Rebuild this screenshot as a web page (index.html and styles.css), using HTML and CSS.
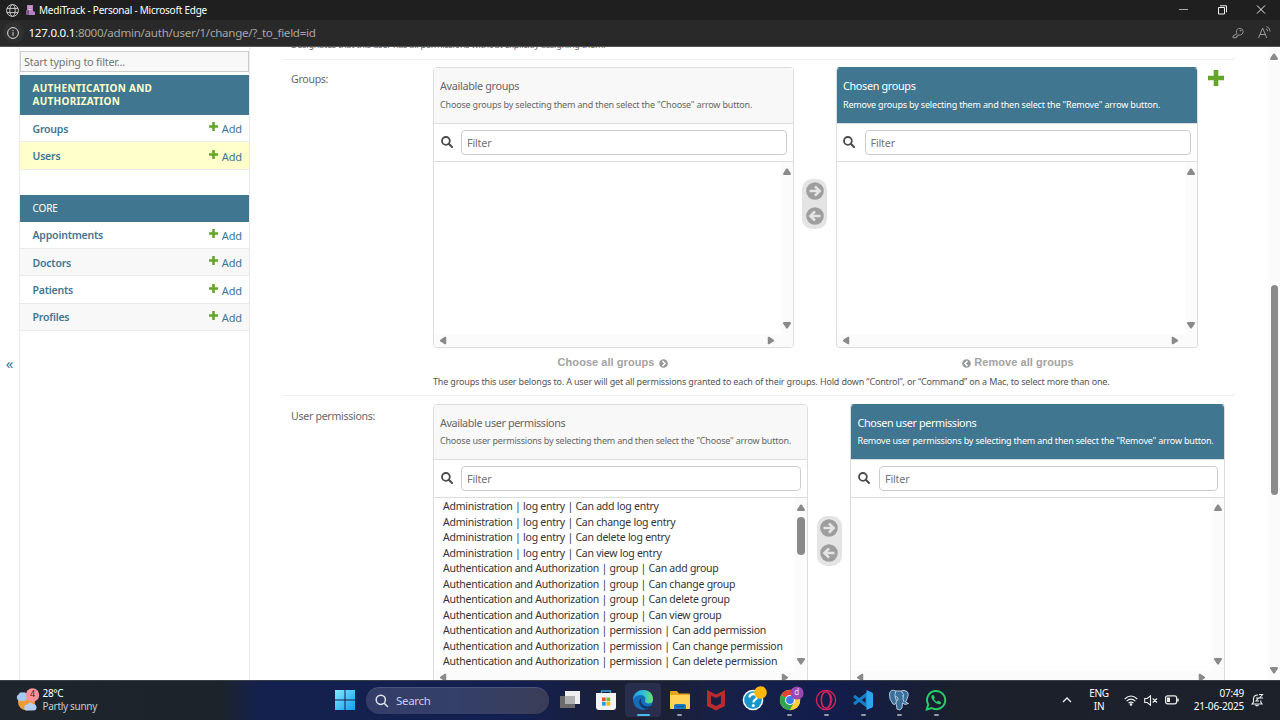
FILE: index.html
```html
<!DOCTYPE html>
<html lang="en">
<head>
<meta charset="utf-8">
<title>MediTrack</title>
<link rel="stylesheet" href="styles.css">
</head>
<body>
<svg width="0" height="0" class="defs">
  <symbol id="plus" viewBox="0 0 16 16"><path d="M5.700 0h4.600v5.700H16v4.600h-5.700V16H5.700v-5.700H0V5.700h5.700z" fill="#64a62a"/></symbol>
  <symbol id="search" viewBox="0 0 12 12"><circle cx="4.9" cy="4.9" r="3.9" fill="none" stroke="#4b4b4b" stroke-width="1.8"/><path d="M7.8 7.8L11 11" stroke="#4b4b4b" stroke-width="2" stroke-linecap="round"/></symbol>
  <symbol id="right" viewBox="0 0 18 18"><circle cx="9" cy="9" r="8.8" fill="#9e9e9e"/><path d="M3.5 9h9M9 4.3L13.6 9 9 13.7" fill="none" stroke="#e4e4e4" stroke-width="2.6"/></symbol>
  <symbol id="left" viewBox="0 0 18 18"><circle cx="9" cy="9" r="8.8" fill="#9e9e9e"/><path d="M14.5 9h-9M9 4.3L4.4 9 9 13.7" fill="none" stroke="#e4e4e4" stroke-width="2.6"/></symbol>
  <symbol id="tri" viewBox="0 0 8 7"><path d="M3.200.8Q4 0 4.800.8L7.900 5.600Q8.200 6.800 7 7H1Q-.2 6.800.1 5.600z" fill="#8a8a8a"/></symbol>
</svg>

<header class="titlebar">
  <svg class="globe" width="13" height="13" viewBox="0 0 13 13" fill="none" stroke="#c9c9c9"><circle cx="6.5" cy="6.5" r="5.9"/><ellipse cx="6.5" cy="6.5" rx="2.7" ry="5.9"/><path d="M1 4.4h11M1 8.6h11"/></svg>
  <svg class="favicon" width="9" height="10" viewBox="0 0 9 10"><path d="M1 0h6v6l2 1v3H1z" fill="#b583b8"/><path d="M0 5h3v5H0z" fill="#7b5a93"/><path d="M2.500 2h3M2.500 4.500h3" stroke="#e8c4e4"/></svg>
  <span class="window-title">MediTrack - Personal - Microsoft Edge</span>
  <svg class="controls" width="87" height="10" viewBox="0 0 87 10" fill="none" stroke="#eee"><path d="M0 4.500h9" stroke="#aaa"/><path d="M39.500 2.500h6v6.500h-6zM41 .8h6.500v6.500"/><path d="M78 .5l8 8M86 .5l-8 8"/></svg>
</header>
<div class="addressbar">
  <span class="info"><svg width="12" height="12" viewBox="0 0 12 12" fill="none" stroke="#ddd"><circle cx="6" cy="6" r="5.400"/><path d="M6 5.200v3.500M6 3v1.200"/></svg></span>
  <span class="url"><b>127.0.0.1</b>:8000/admin/auth/user/1/change/?_to_field=id</span>
  <svg class="key" width="12" height="12" viewBox="0 0 12 12" fill="none" stroke="#989898"><path d="M5 6.700A3.400 3.400 0 1 1 7 8H5.800v1.300H4.300v1.500H1V9z"/><circle cx="8.600" cy="3.600" r=".5"/></svg>
  <svg class="aloud" width="13" height="13" viewBox="0 0 13 13" fill="none" stroke="#989898"><path d="M.5 12L4.700 2l4.100 10M2 8.500h5.300M8 2.700q1.700.8 1.600 2.600M8.500.5q3.600 1.300 3.500 5"/></svg>
</div>

<div class="viewport">
  <div class="toggle">«</div>
  <nav class="sidebar">
    <div class="nav-filter">Start typing to filter...</div>
    <section class="module auth">
      <h2 class="caption current"><span>AUTHENTICATION AND</span><br><span>AUTHORIZATION</span></h2>
      <div class="model"><b>Groups</b><a><svg width="9" height="9"><use href="#plus"/></svg>Add</a></div>
      <div class="model selected"><b>Users</b><a><svg width="9" height="9"><use href="#plus"/></svg>Add</a></div>
    </section>
    <section class="module">
      <h2 class="caption">CORE</h2>
      <div class="model"><b>Appointments</b><a><svg width="9" height="9"><use href="#plus"/></svg>Add</a></div>
      <div class="model alt"><b>Doctors</b><a><svg width="9" height="9"><use href="#plus"/></svg>Add</a></div>
      <div class="model"><b>Patients</b><a><svg width="9" height="9"><use href="#plus"/></svg>Add</a></div>
      <div class="model alt"><b>Profiles</b><a><svg width="9" height="9"><use href="#plus"/></svg>Add</a></div>
    </section>
  </nav>

  <main class="content">
    <div class="form-row superuser"><p class="cut-help">Designates that this user has all permissions without explicitly assigning them.</p></div>

    <div class="form-row groups">
      <label>Groups:</label>
      <div class="field">
        <div class="selector">
          <div class="side">
            <div class="box">
              <div class="head"><h3>Available groups</h3><p>Choose groups by selecting them and then select the "Choose" arrow button.</p></div>
              <div class="filter"><svg width="12" height="12"><use href="#search"/></svg><div class="input">Filter</div></div>
              <div class="list"><div class="options"></div><div class="vbar"><svg class="tri"><use href="#tri"/></svg><svg class="tri down"><use href="#tri"/></svg></div><div class="hbar"><svg class="tri lt"><use href="#tri"/></svg><svg class="tri rt"><use href="#tri"/></svg></div></div>
            </div>
            <div class="all"><span>Choose all groups</span><svg width="9" height="9" viewBox="0 0 9 9"><circle cx="4.500" cy="4.500" r="4.300" fill="#999"/><path d="M3.500 2l2.500 2.500L3.500 7" fill="none" stroke="#fff" stroke-width="1.500"/></svg></div>
          </div>
          <div class="chooser"><svg width="18" height="18"><use href="#right"/></svg><svg width="18" height="18"><use href="#left"/></svg></div>
          <div class="side to">
            <div class="box chosen">
              <div class="head"><h3>Chosen groups</h3><p>Remove groups by selecting them and then select the "Remove" arrow button.</p></div>
              <div class="filter"><svg width="12" height="12"><use href="#search"/></svg><div class="input">Filter</div></div>
              <div class="list"><div class="options"></div><div class="vbar"><svg class="tri"><use href="#tri"/></svg><svg class="tri down"><use href="#tri"/></svg></div><div class="hbar"><svg class="tri lt"><use href="#tri"/></svg><svg class="tri rt"><use href="#tri"/></svg></div></div>
            </div>
            <div class="all"><svg width="9" height="9" viewBox="0 0 9 9"><circle cx="4.500" cy="4.500" r="4.300" fill="#999"/><path d="M5.500 2L3 4.500 5.500 7" fill="none" stroke="#fff" stroke-width="1.500"/></svg><span>Remove all groups</span></div>
          </div>
          <svg class="add-related" width="16" height="16"><use href="#plus"/></svg>
        </div>
        <p class="help">The groups this user belongs to. A user will get all permissions granted to each of their groups. Hold down “Control”, or “Command” on a Mac, to select more than one.</p>
      </div>
    </div>

    <div class="form-row permissions">
      <label>User permissions:</label>
      <div class="field">
        <div class="selector">
          <div class="side">
            <div class="box">
              <div class="head"><h3>Available user permissions</h3><p>Choose user permissions by selecting them and then select the "Choose" arrow button.</p></div>
              <div class="filter"><svg width="12" height="12"><use href="#search"/></svg><div class="input">Filter</div></div>
              <div class="list">
                <div class="options">
                  <div>Administration | log entry | Can add log entry</div>
                  <div>Administration | log entry | Can change log entry</div>
                  <div>Administration | log entry | Can delete log entry</div>
                  <div>Administration | log entry | Can view log entry</div>
                  <div>Authentication and Authorization | group | Can add group</div>
                  <div>Authentication and Authorization | group | Can change group</div>
                  <div>Authentication and Authorization | group | Can delete group</div>
                  <div>Authentication and Authorization | group | Can view group</div>
                  <div>Authentication and Authorization | permission | Can add permission</div>
                  <div>Authentication and Authorization | permission | Can change permission</div>
                  <div>Authentication and Authorization | permission | Can delete permission</div>
                </div>
                <div class="vbar"><svg class="tri"><use href="#tri"/></svg><i class="thumb"></i><svg class="tri down"><use href="#tri"/></svg></div><div class="hbar"><svg class="tri lt"><use href="#tri"/></svg><svg class="tri rt"><use href="#tri"/></svg></div>
              </div>
            </div>
          </div>
          <div class="chooser"><svg width="18" height="18"><use href="#right"/></svg><svg width="18" height="18"><use href="#left"/></svg></div>
          <div class="side to">
            <div class="box chosen">
              <div class="head"><h3>Chosen user permissions</h3><p>Remove user permissions by selecting them and then select the "Remove" arrow button.</p></div>
              <div class="filter"><svg width="12" height="12"><use href="#search"/></svg><div class="input">Filter</div></div>
              <div class="list"><div class="options"></div><div class="vbar"><svg class="tri"><use href="#tri"/></svg><svg class="tri down"><use href="#tri"/></svg></div><div class="hbar"><svg class="tri lt"><use href="#tri"/></svg><svg class="tri rt"><use href="#tri"/></svg></div></div>
            </div>
          </div>
        </div>
      </div>
    </div>
  </main>
  <div class="page-scroll"><svg class="tri"><use href="#tri"/></svg><i></i><svg class="tri down"><use href="#tri"/></svg></div>
</div>

<footer class="taskbar">
  <div class="weather">
    <svg width="24" height="24" viewBox="0 0 24 24"><circle cx="10.500" cy="14" r="8.500" fill="#f09a35"/><path d="M4 13a3.500 3.500 0 0 1-1.500-6.500Q4 3.500 7 4.500q3-1 4 2.500 1 5-3 6z" fill="#a5c8f5"/><path d="M11 22.500a3 3 0 0 1 .5-6q2-3.500 5-.8 4 .3 4 3.800 0 3-3 3z" fill="#b4cff5"/><circle cx="16.500" cy="7" r="6.700" fill="#ff9298"/></svg>
    <span class="badge">4</span>
    <div><div class="temp">28°C</div><div class="cond">Partly sunny</div></div>
  </div>
  <div class="apps">
    <svg class="start" width="20" height="20" viewBox="0 0 20 20"><defs><linearGradient id="win" x2="1" y2="1"><stop stop-color="#7deaff"/><stop offset="1" stop-color="#159bf3"/></linearGradient></defs><path d="M0 0h9.500v9.500H0zM10.500 0H20v9.500h-9.500zM0 10.500h9.500V20H0zM10.500 10.500H20V20h-9.500z" fill="url(#win)"/></svg>
    <div class="searchbox"><svg width="14" height="14" viewBox="0 0 14 14" fill="none" stroke="#e2e5f2" stroke-width="1.500"><circle cx="5.800" cy="5.800" r="4.600"/><path d="M9.200 9.200l3.800 3.800"/></svg><span>Search</span></div>
    <div class="app"><svg width="22" height="22" viewBox="0 0 22 22"><path d="M1 7h15v12H1z" fill="#6b6b6e"/><path d="M6 2h15v13H6z" fill="#eee"/><path d="M6 7h10v8H6z" fill="#b0b0b0"/></svg></div>
    <div class="app"><svg width="22" height="22" viewBox="0 0 22 22"><path d="M6.500 5V2h9v3" fill="none" stroke="#36a9e0" stroke-width="1.300"/><path d="M1 4h20v14q0 3-3 3H4q-3 0-3-3z" fill="#f3f3f3"/><path d="M7 8.500h3.700v3.700H7z" fill="#e95028"/><path d="M11.500 8.500h3.700v3.700h-3.700z" fill="#7cb928"/><path d="M7 13h3.700v3.700H7z" fill="#249fe2"/><path d="M11.500 13h3.700v3.700h-3.700z" fill="#f7b717"/></svg></div>
    <div class="app active"><svg width="22" height="22" viewBox="0 0 22 22"><defs><linearGradient id="eg" x2="1"><stop stop-color="#1f9be5"/><stop offset=".5" stop-color="#30bfdc"/><stop offset="1" stop-color="#6be16a"/></linearGradient></defs><circle cx="11" cy="11" r="10" fill="#146db9"/><path d="M1 11C1-2 21-2 21 10q0 5-5.500 4.500-4-.8-2-4 0-4-4-4.500Q3 6 1 11z" fill="url(#eg)"/><path d="M8 10q-3 6 4 9.500 5 1.200 8-3-7 2.500-10-1.500-2-3-.5-5z" fill="#16346e"/></svg><i></i></div>
    <div class="app"><svg width="22" height="22" viewBox="0 0 22 22"><path d="M1 3q0-1 1-1h6l2 2.500h10q1 0 1 1V10H1z" fill="#e7a51f"/><path d="M1 6h20v13q0 1-1 1H2q-1 0-1-1z" fill="#ffd358"/><path d="M5 20v-3q0-2 2-2h8q2 0 2 2v3z" fill="#1979c7"/><path d="M7 17.500h8" stroke="#0d4d8b"/></svg><i></i></div>
    <div class="app"><svg width="22" height="22" viewBox="0 0 22 22"><path d="M2 1l9 4.500L20 1v16l-9 4.500L2 17z" fill="#b92a31"/><path d="M6 6.500l5 2.500 5-2.500v8L11 17l-5-2.500z" fill="#1b2040"/></svg></div>
    <div class="app"><svg class="wide" width="26" height="26" viewBox="0 0 26 26"><circle cx="12" cy="15" r="10.300" fill="#f5fafd"/><circle cx="12" cy="15" r="8.800" fill="#1695cf"/><path d="M8.500 12.500q.2-3.500 3.800-3.500 3.700 0 3.700 3 0 2-2.200 3-1.300.7-1.300 2.500" fill="none" stroke="#fff" stroke-width="2.300"/><circle cx="12.300" cy="20.600" r="1.500" fill="#fff"/><circle cx="19.500" cy="7.500" r="6.300" fill="#ffb70b"/></svg></div>
    <div class="app"><svg class="wide" width="26" height="26" viewBox="0 0 26 26"><circle cx="12" cy="15" r="10.200" fill="#ffcf3b"/><path d="M12 15L3.200 10A10.200 10.200 0 0 1 20.800 10z" fill="#e94335"/><path d="M12 15L3.200 10A10.200 10.200 0 0 0 12 25.200L16 17z" fill="#31a451"/><path d="M12 10h8.900a10.200 10.200 0 0 1-8.900 15.200l4.300-7.700z" fill="#ffcf3b"/><circle cx="12" cy="15" r="4.900" fill="#fff"/><circle cx="12" cy="15" r="3.900" fill="#397de8"/><circle cx="19" cy="8" r="6.600" fill="#9b48b4"/></svg><em>d</em><i></i></div>
    <div class="app"><svg width="22" height="22" viewBox="0 0 22 22" fill="none" stroke="#dc245a"><circle cx="11" cy="11" r="9.600" stroke-width="1.300"/><ellipse cx="11" cy="11" rx="4.700" ry="8.300" stroke-width="1.600"/><path d="M13 2.500q8 7.500 0 17" /></svg><i></i></div>
    <div class="app"><svg width="22" height="22" viewBox="0 0 22 22"><path d="M2 7l13 10V5L2 15" fill="none" stroke="#1681c8" stroke-width="3"/><path d="M14.500 1L20 3.500q1 .5 1 1.500v12q0 1-1 1.500L14.500 21z" fill="#2aa5ee"/></svg><i></i></div>
    <div class="app"><svg width="22" height="22" viewBox="0 0 22 22"><path d="M8 2Q2-.5 1.500 5T5 15q2 1.500 3-1l1 6q3 2.500 5-1l.5-5q2 2.500 6 .5l-3-1.500Q22 5 19 2.500 16 .5 13 2z" fill="#396f9b" stroke="#b9c8d8" stroke-width="1"/><path d="M8 2Q6 6 7.500 9T8 14M13 2q4 3 2 8l1 3M7 8q2-1.500 3 1t-2 3M14 7h1" fill="none" stroke="#b9c8d8" stroke-width="1"/></svg><i></i></div>
    <div class="app"><svg width="22" height="22" viewBox="0 0 22 22"><path d="M1.800 20.500L3.200 15.500A9.100 9.100 0 1 1 6.700 19z" fill="none" stroke="#25cf68" stroke-width="2"/><path d="M7.300 6q-2.300 2 1 5.800 3.500 4.200 6.500 3.400 2-1 1-2.300l-2.300-1.200q-.8-.1-1.500 1.300-2-.7-3.200-2.900l1-1.200L8.900 6.200z" fill="#25cf68"/></svg><i></i></div>
  </div>
  <div class="tray">
    <svg class="chev" width="10" height="6" viewBox="0 0 10 6" fill="none" stroke="#eee" stroke-width="1.300"><path d="M1 5l4-4 4 4"/></svg>
    <div class="lang">ENG<br>IN</div>
    <svg class="wifi" width="14" height="11" viewBox="0 0 14 11" fill="none" stroke="#eee" stroke-width="1.100"><path d="M.7 4q6.300-6 12.600 0M2.600 6.200q4.400-4 8.800 0M4.500 8.200q2.500-2.200 5 0"/><circle cx="7" cy="9.500" r=".8" fill="#eee"/></svg>
    <svg class="mute" width="14" height="11" viewBox="0 0 14 11" fill="none" stroke="#eee" stroke-width="1.100"><path d="M.7 3.500h2.500L6.500.8v9.400L3.200 7.500H.7zM8.700 3.500l4.300 4M13 3.500l-4.300 4"/></svg>
    <svg class="battery" width="14" height="10" viewBox="0 0 14 10"><rect x=".6" y=".8" width="11" height="8" rx="2" fill="none" stroke="#eee" stroke-width="1.200"/><path d="M2 2.500h3v4.500H2z" fill="#eee"/><path d="M13 3.500v3" stroke="#eee" stroke-width="1.500"/></svg>
    <div class="clock">07:49<br>21-06-2025</div>
    <svg class="bell" width="13" height="14" viewBox="0 0 13 14" fill="none" stroke="#eee" stroke-width="1.100"><path d="M7 2Q2.500 2 2.500 6v3L1 11h10L9.800 9V7.500M4.500 12q1.500 1.500 3 0M8 1.500h3.500L8.500 5H12M5 5h2.500L5 8h3"/></svg>
  </div>
</footer>
</body>
</html>
```
FILE: styles.css
```css
* { box-sizing: border-box; }
body { margin: 0; width: 1280px; height: 720px; overflow: hidden; display: flex; flex-direction: column; font-family: "Noto Sans", "Open Sans", sans-serif; font-size: 10.5px; color: #333; background: #fff; }
h2, h3, p { margin: 0; font-weight: 400; white-space: nowrap; }
svg { display: block; flex: none; }
.defs { position: absolute; }

.titlebar { height: 20px; flex: none; background: #1f1f1f; display: flex; align-items: center; padding-left: 6px; color: #fff; }
.favicon { margin-left: 7px; }
.window-title { margin-left: 4px; font-size: 10px; letter-spacing: -0.23px; flex: 1; }
.controls { margin-right: 14px; }
.addressbar { height: 27px; flex: none; background: #292929; border-bottom: 1px solid #555; display: flex; align-items: center; padding: 0 0 1px 2.5px; color: #a6a6a6; }
.info { width: 21px; height: 21px; border-radius: 50%; background: #303030; display: grid; place-items: center; }
.url { margin-left: 5px; font-size: 11.6px; letter-spacing: -0.28px; flex: 1; }
.url b { font-weight: 400; color: #fff; }
.aloud { margin: 0 9px 0 14px; }

.viewport { flex: 1; min-height: 0; display: flex; overflow: hidden; }
.toggle { width: 19px; flex: none; padding-top: 306px; text-align: center; font-size: 15px; line-height: 20px; color: #417690; }
.sidebar { width: 231px; flex: none; border: solid #eaeaea; border-width: 0 1px; padding-top: 4px; }
.nav-filter { height: 20.5px; background: #f8f8f8; border: 1px solid #ccc; padding-left: 3px; line-height: 20px; color: #757575; font-size: 10.8px; letter-spacing: -0.2px; }
.module { margin: 3.5px 0 25px; }
.caption { background: #417690; color: #fff; font-size: 10px; line-height: 13px; padding: 7px 13px 7px 12.5px; height: 27px; letter-spacing: -0.1px; }
.caption.current { height: 40px; color: #ffc; font-weight: 700; font-size: 10px; letter-spacing: 0.28px; }
.model { height: 27.35px; border-bottom: 1px solid #eaeaea; padding: 1px 7px 0 12.5px; display: flex; align-items: center; justify-content: space-between; color: #417690; letter-spacing: -0.2px; }
.model b { font-weight: 600; }
.model a { display: flex; align-items: center; gap: 4px; font-size: 11px; letter-spacing: -0.1px; }
.model a svg { margin-top: -4px; }
.model.selected { background: #ffc; }
.model.alt { background: #f8f8f8; }

.content { flex: 1; padding: 0 33px; }
.form-row { border-bottom: 1px solid #eee; width: 952px; padding-left: 8px; display: flex; }
.form-row label { width: 142px; flex: none; color: #666; font-size: 10.6px; line-height: 16px; letter-spacing: -0.3px; padding-top: 4px; }
.superuser { height: 13px; }
.cut-help { font-size: 9px; line-height: 13px; margin-top: -9px; color: #666; letter-spacing: -0.22px; }
.groups { height: 336px; padding-top: 7px; }
.permissions { height: 400px; padding-top: 8px; }
.selector { display: flex; align-items: flex-start; }
.side { width: 361px; flex: none; }
.side.to { width: 362px; }
.permissions .side { width: 375px; }
.box { border: 1px solid #ddd; border-radius: 4px; height: 281px; display: flex; flex-direction: column; overflow: hidden; }
.box.chosen { border-top-color: #417690; }
.head { height: 56px; flex: none; background: #f8f8f8; color: #666; padding: 9px 6px; border-bottom: 1px solid #ddd; }
.head h3 { font-size: 10.8px; line-height: 17px; letter-spacing: -0.32px; }
.permissions .head h3 { letter-spacing: -0.38px; }
.head p { font-size: 9px; line-height: 14px; margin-top: 4px; letter-spacing: -0.18px; }
.chosen .head { background: #417690; color: #fff; margin: 0 -1px; padding-left: 7.5px; }
.permissions .head { height: 55px; }
.permissions .head p { margin-top: 3px; letter-spacing: -0.2px; }
.filter { height: 38px; flex: none; border-bottom: 1px solid #ddd; display: flex; align-items: center; gap: 8px; padding: 0 6px 1px 7px; }
.filter svg { margin-left: -0.5px; margin-right: 0.5px; }
.chosen .filter { gap: 9px; }
.input { flex: 1; height: 25px; border: 1px solid #ccc; border-radius: 4px; padding-left: 5px; line-height: 24px; font-size: 10.8px; color: #757575; letter-spacing: -0.2px; }
.list { flex: 1; min-height: 0; display: grid; grid-template: 1fr 13px / 1fr 12px; }
.options { padding: 1.3px 0 0 9px; color: #333; font-size: 10.5px; line-height: 15.48px; letter-spacing: -0.25px; white-space: nowrap; }
.vbar { background: #fbfbfb; display: flex; flex-direction: column; align-items: center; justify-content: space-between; padding: 6px 0 5px; }
.permissions .vbar { padding-bottom: 6px; }
.hbar { grid-column: 1 / 3; background: #fbfbfb; display: flex; align-items: center; justify-content: space-between; padding: 0 18px 0 5px; }
.tri { width: 8px; height: 7px; }
.down { transform: rotate(180deg); }
.lt { transform: rotate(-90deg); }
.rt { transform: rotate(90deg); }
.thumb { width: 8px; height: 38px; background: #8a8a8a; border-radius: 4px; margin: 6px 0 auto; }
.chooser { width: 25px; height: 50px; margin: 112px 8px 0; border-radius: 10px; background: #e4e4e4; display: flex; flex-direction: column; align-items: center; justify-content: space-between; padding: 3px 0 4px; flex: none; }
.groups .chooser { margin-right: 8.5px; }
.permissions .chooser { margin: 111.5px 8.5px 0; }
.add-related { margin: 3px 0 0 10px; }
.all { display: flex; height: 27px; align-items: center; justify-content: center; gap: 5px; color: #a3a3a3; font: bold 11px "Liberation Sans", sans-serif; letter-spacing: 0.05px; padding-right: 1px; }
.all svg { margin-top: 3px; }
.chosen + .all { gap: 3px; padding-left: 4px; }
.help { font-size: 9px; line-height: 14px; color: #555; letter-spacing: -0.165px; }
.page-scroll { width: 12px; flex: none; background: #fbfbfb; display: flex; flex-direction: column; align-items: center; padding: 6px 0 6px; }
.page-scroll i { width: 7px; height: 210px; margin: 225px 0 auto; background: #8a8a8a; border-radius: 4px; }

.taskbar { height: 40px; flex: none; display: flex; align-items: center; background: linear-gradient(90deg, #1e252c 0, #1d232b 220px, #14214e 260px, #131f50 520px, #1d2030 640px, #16204a 740px, #121d4c 830px, #1b202c 960px, #1c212a); border-top: 1px solid #3a4048; color: #fff; position: relative; padding-bottom: 1px; }
.weather { width: 335px; padding-left: 16px; display: flex; gap: 2.5px; font-size: 10px; line-height: 13px; position: relative; align-items: center; }
.badge { position: absolute; left: 30px; top: 0; font-size: 9px; color: #422; }
.temp { letter-spacing: -0.3px; }
.cond { color: #c6c9cc; letter-spacing: -0.3px; }
.apps { display: flex; align-items: center; height: 38px; }
.searchbox { width: 183px; height: 27px; margin: 0 2.5px 0 11px; border-radius: 14px; background: linear-gradient(90deg, #343d67, #343f6a 50%, #3a3d56); border-top: 1px solid #4b547c; display: flex; align-items: center; padding-left: 9px; gap: 7px; font-size: 11.5px; color: #c9cee1; letter-spacing: -0.3px; }
.app { width: 36.64px; height: 34px; display: grid; place-items: center; position: relative; }
.app i { position: absolute; bottom: 1px; left: 16px; width: 5px; height: 2px; border-radius: 1px; background: #9698a5; }
.app.active { background: #282e4b; border-radius: 4px; }
.app.active i { width: 13px; left: 12px; background: #4cb9ee; }
.wide { margin: -5px 0 0 2px; }
.app em { position: absolute; left: 23px; top: 2px; font-size: 8px; font-style: normal; line-height: 14px; color: #edf; }
.tray { margin-left: auto; display: flex; align-items: center; font-size: 10px; line-height: 13.5px; }
.lang { margin-left: 17px; width: 20px; text-align: center; letter-spacing: -0.3px; }
.wifi { margin-left: 15px; }
.mute { margin-left: 6px; }
.battery { margin-left: 7px; }
.clock { width: 65px; text-align: right; letter-spacing: -0.2px; }
.bell { margin: 0 16px 0 7px; }
```
